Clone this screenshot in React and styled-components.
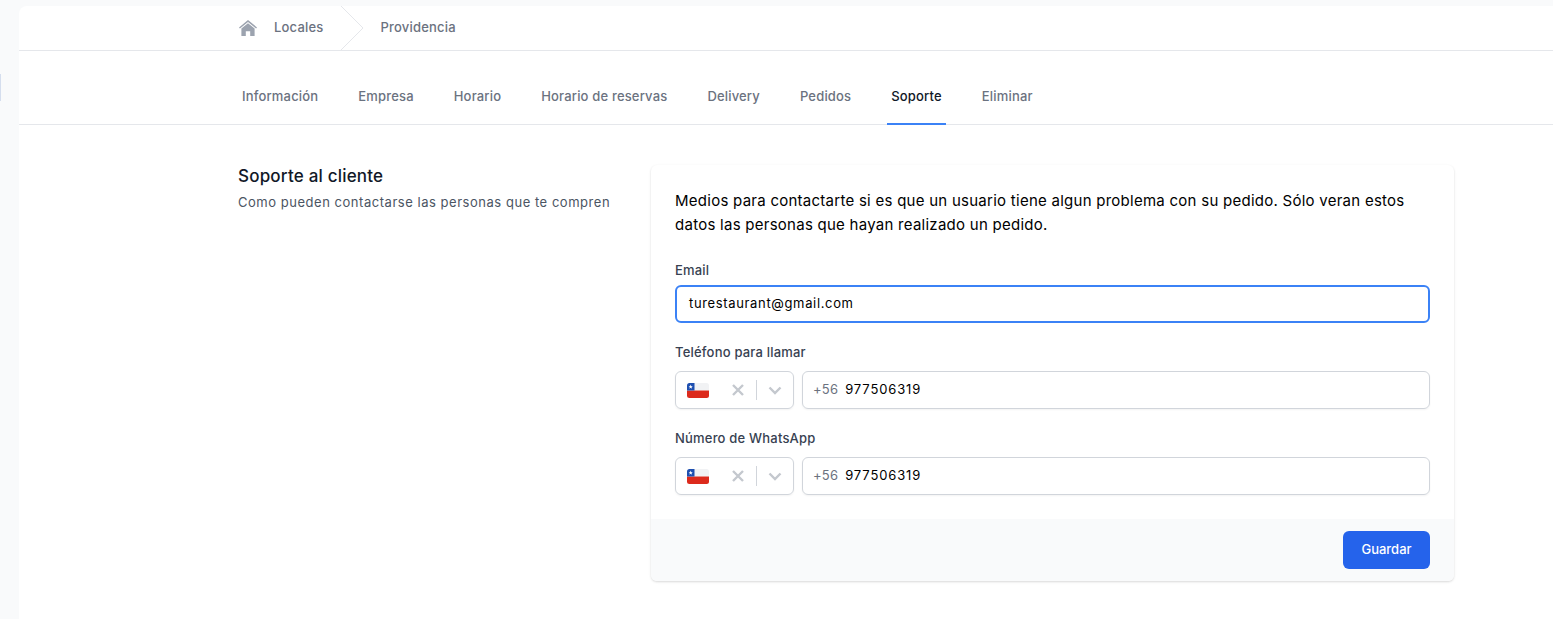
import React from 'react'
import styled, { createGlobalStyle } from 'styled-components'

const tabs = ['Información', 'Empresa', 'Horario', 'Horario de reservas', 'Delivery', 'Pedidos', 'Soporte', 'Eliminar']

const GlobalStyle = createGlobalStyle`
  html, body {
    margin: 0;
    height: 100%;
    background: #f9fafb;
    overflow: hidden;
  }
  * {
    box-sizing: border-box;
  }
  body {
    font-family: 'Inter', 'Liberation Sans', sans-serif;
  }
`

const ChileFlag = ({ id }) => (
  <FlagSvg viewBox="0 0 22 15">
    <defs>
      <clipPath id={id}>
        <rect width="22" height="15" rx="2.5" />
      </clipPath>
    </defs>
    <g clipPath={`url(#${id})`}>
      <rect width="22" height="7.5" fill="#f1f2f4" />
      <rect y="7.5" width="22" height="7.5" fill="#dc2a1c" />
      <rect width="7.5" height="7.5" fill="#1e4fb0" />
      <path d="M3.7 1.6l.6 1.6h1.5l-1.2 1 .5 1.6-1.4-1-1.4 1 .5-1.6-1.2-1h1.5z" fill="#fff" />
    </g>
  </FlagSvg>
)

const PhoneField = ({ id, label, number }) => (
  <PhoneBlock>
    <Label>{label}</Label>
    <PhoneRow>
      <CountrySelect>
        <ChileFlag id={id} />
        <SelectControls>
          <SelectIcon viewBox="0 0 20 20">
            <path d="M5 5l10 10M15 5L5 15" />
          </SelectIcon>
          <SelectDivider />
          <SelectIcon viewBox="0 0 20 20">
            <path d="M4.5 7.500L10 13l5.500-5.500" />
          </SelectIcon>
        </SelectControls>
      </CountrySelect>
      <PhoneInput>
        <Prefix>+56</Prefix>
        <PhoneNumber>{number}</PhoneNumber>
      </PhoneInput>
    </PhoneRow>
  </PhoneBlock>
)

const App = () => (
  <>
    <GlobalStyle />
    <Page>
      <SideStrip>
        <SideMark />
      </SideStrip>
      <Main>
        <Breadcrumb>
          <Crumbs>
            <HomeIcon viewBox="0 0 18 16">
              <path d="M9 0L0 7.400l.9 1.100L9 1.900l8.100 6.600.9-1.100z" />
              <path d="M9 3.200L2.400 8.600V16h4.400v-4.800h4.400V16h4.400V8.600z" />
            </HomeIcon>
            <CrumbText>Locales</CrumbText>
            <CrumbArrow viewBox="0 0 24 44">
              <path d="M1 0l22 22L1 44" />
            </CrumbArrow>
            <CrumbText>Providencia</CrumbText>
          </Crumbs>
        </Breadcrumb>
        <TabBar>
          {tabs.map((tab) => (
            <Tab key={tab} active={tab === 'Soporte'}>
              {tab}
            </Tab>
          ))}
        </TabBar>
        <Content>
          <Intro>
            <IntroTitle>Soporte al cliente</IntroTitle>
            <IntroText>Como pueden contactarse las personas que te compren</IntroText>
          </Intro>
          <Card>
            <CardBody>
              <Description>
                Medios para contactarte si es que un usuario tiene algun problema con su pedido. Sólo veran estos datos
                las personas que hayan realizado un pedido.
              </Description>
              <Label>Email</Label>
              <EmailInput>turestaurant@gmail.com</EmailInput>
              <PhoneField id="flagCall" label="Teléfono para llamar" number="977506319" />
              <PhoneField id="flagWhatsapp" label="Número de WhatsApp" number="977506319" />
            </CardBody>
            <CardFooter>
              <SaveButton>Guardar</SaveButton>
            </CardFooter>
          </Card>
        </Content>
      </Main>
    </Page>
  </>
)

export default App

const Page = styled.div`
  display: flex;
  height: 619px;
  padding-top: 6px;
  overflow: hidden;
`

const SideStrip = styled.div`
  width: 19px;
  flex-shrink: 0;
  padding-top: 68px;
`

const SideMark = styled.div`
  width: 1px;
  height: 27px;
  background: #d5deee;
`

const Main = styled.main`
  flex: 1;
  background: #fff;
  border-top-left-radius: 8px;
  min-height: 640px;
`

const Breadcrumb = styled.nav`
  height: 45px;
  border-bottom: 1px solid #e5e7eb;
  padding-left: 220px;
`

const Crumbs = styled.div`
  display: flex;
  align-items: center;
  height: 44px;
`

const HomeIcon = styled.svg`
  width: 18px;
  height: 16px;
  margin-right: 17px;
  fill: #9ca3af;
`

const CrumbText = styled.span`
  padding-bottom: 2px;
  font-size: 13px;
  font-weight: 500;
  color: #6b7280;
  letter-spacing: 0.2px;
`

const CrumbArrow = styled.svg`
  width: 24px;
  height: 44px;
  margin: 0 17px 0 16px;
  fill: none;
  stroke: #e5e7eb;
`

const TabBar = styled.div`
  display: flex;
  gap: 32px;
  height: 74px;
  padding-left: 219px;
  border-bottom: 1px solid #e5e7eb;
`

const Tab = styled.div`
  display: flex;
  align-items: center;
  height: 74px;
  padding: 20px 4px 2px;
  font-size: 13px;
  font-weight: 500;
  letter-spacing: 0.175px;
  color: ${({ active }) => (active ? '#111827' : '#6b7280')};
  border-bottom: 2px solid ${({ active }) => (active ? '#3b82f6' : 'transparent')};
`

const Content = styled.div`
  display: flex;
  padding: 40px 0 0 219px;
`

const Intro = styled.div`
  width: 413px;
  flex-shrink: 0;
`

const IntroTitle = styled.h3`
  margin: 0;
  font-size: 17px;
  font-weight: 500;
  line-height: 22px;
  letter-spacing: 0.2px;
  color: #111827;
`

const IntroText = styled.p`
  margin: 5px 0 0;
  font-size: 13px;
  line-height: 20px;
  letter-spacing: 0.53px;
  color: #4b5563;
`

const Card = styled.section`
  width: 803px;
  height: 416px;
  border-radius: 6px;
  background: #fff;
  box-shadow: 0 1px 3px rgba(0, 0, 0, 0.1), 0 1px 2px rgba(0, 0, 0, 0.06);
  overflow: hidden;
`

const CardBody = styled.div`
  height: 354px;
  padding: 24px;
`

const Description = styled.p`
  margin: 0 0 23px;
  font-size: 15px;
  line-height: 24px;
  letter-spacing: 0.26px;
  color: #000;
`

const Label = styled.div`
  font-size: 13px;
  font-weight: 500;
  line-height: 20px;
  letter-spacing: 0.2px;
  color: #374151;
`

const EmailInput = styled.div`
  display: flex;
  align-items: center;
  height: 38px;
  margin-top: 5px;
  padding: 0 12px 2px;
  border: 2px solid #3b82f6;
  border-radius: 6px;
  font-size: 13px;
  letter-spacing: 0.65px;
  color: #000;
`

const PhoneBlock = styled.div`
  margin-top: 19px;
`

const PhoneRow = styled.div`
  display: flex;
  gap: 8px;
  margin-top: 9px;
`

const CountrySelect = styled.div`
  display: flex;
  align-items: center;
  justify-content: space-between;
  width: 119px;
  height: 38px;
  padding: 0 8px 0 11px;
  border: 1px solid #d1d5db;
  border-radius: 6px;
  box-shadow: 0 1px 2px rgba(0, 0, 0, 0.05);
`

const FlagSvg = styled.svg`
  width: 22px;
  height: 15px;
  flex-shrink: 0;
`

const SelectControls = styled.div`
  display: flex;
  align-items: center;
  gap: 8px;
`

const SelectIcon = styled.svg`
  width: 20px;
  height: 20px;
  fill: none;
  stroke: #c4c8ce;
  stroke-width: 2.4;
`

const SelectDivider = styled.div`
  width: 1px;
  height: 20px;
  background: #d1d5db;
`

const PhoneInput = styled.div`
  display: flex;
  flex: 1;
  align-items: center;
  gap: 7px;
  height: 38px;
  padding: 0 10px 2px;
  border: 1px solid #d1d5db;
  border-radius: 6px;
  box-shadow: 0 1px 2px rgba(0, 0, 0, 0.05);
  font-size: 13px;
  letter-spacing: 0.87px;
`

const Prefix = styled.span`
  color: #6b7280;
  letter-spacing: 0.2px;
`

const PhoneNumber = styled.span`
  color: #000;
`

const CardFooter = styled.div`
  display: flex;
  justify-content: flex-end;
  align-items: center;
  height: 62px;
  padding: 0 24px;
  background: #f9fafb;
`

const SaveButton = styled.button`
  width: 87px;
  height: 38px;
  padding: 0 0 2px;
  border: none;
  border-radius: 6px;
  background: #2563eb;
  color: #fff;
  font-family: inherit;
  font-size: 13px;
  font-weight: 500;
`
